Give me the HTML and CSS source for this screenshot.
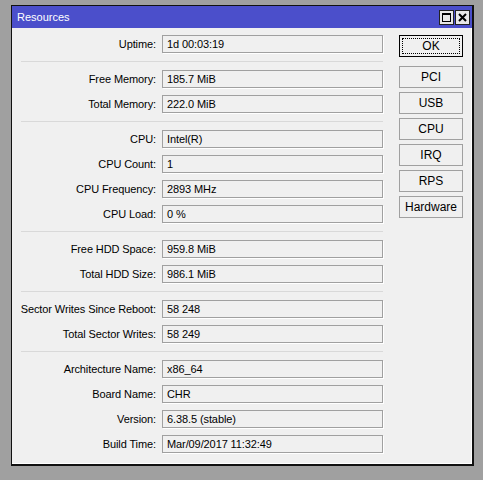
FILE: index.html
```html
<!DOCTYPE html>
<html lang="en">
<head>
  <link rel="stylesheet" href="styles.css">
</head>
<body>

<div class="win">
  <div class="titlebar">
    <span class="title">Resources</span>
    <div class="tbtns">
      <span class="tbtn">
        <svg width="9" height="9" viewBox="0 0 9 9"><rect x="0.5" y="0.5" width="8" height="8" fill="none" stroke="#000" stroke-width="1"/><rect x="0" y="0" width="9" height="2" fill="#000"/></svg>
      </span>
      <span class="tbtn">
        <svg width="9" height="9" viewBox="0 0 9 9"><path d="M1 1 L8 8 M8 1 L1 8" stroke="#000" stroke-width="2"/></svg>
      </span>
    </div>
  </div>

  <div class="body">
    <div class="fields">
      <div class="row"><span class="lbl">Uptime:</span><span class="val">1d 00:03:19</span></div>
      <div class="sep"></div>
      <div class="row"><span class="lbl">Free Memory:</span><span class="val">185.7 MiB</span></div>
      <div class="row"><span class="lbl">Total Memory:</span><span class="val">222.0 MiB</span></div>
      <div class="sep"></div>
      <div class="row"><span class="lbl">CPU:</span><span class="val">Intel(R)</span></div>
      <div class="row"><span class="lbl">CPU Count:</span><span class="val">1</span></div>
      <div class="row"><span class="lbl">CPU Frequency:</span><span class="val">2893 MHz</span></div>
      <div class="row"><span class="lbl">CPU Load:</span><span class="val">0 %</span></div>
      <div class="sep"></div>
      <div class="row"><span class="lbl">Free HDD Space:</span><span class="val">959.8 MiB</span></div>
      <div class="row"><span class="lbl">Total HDD Size:</span><span class="val">986.1 MiB</span></div>
      <div class="sep"></div>
      <div class="row"><span class="lbl">Sector Writes Since Reboot:</span><span class="val">58 248</span></div>
      <div class="row"><span class="lbl">Total Sector Writes:</span><span class="val">58 249</span></div>
      <div class="sep"></div>
      <div class="row"><span class="lbl">Architecture Name:</span><span class="val">x86_64</span></div>
      <div class="row"><span class="lbl">Board Name:</span><span class="val">CHR</span></div>
      <div class="row"><span class="lbl">Version:</span><span class="val">6.38.5 (stable)</span></div>
      <div class="row"><span class="lbl">Build Time:</span><span class="val">Mar/09/2017 11:32:49</span></div>
    </div>

    <div class="buttons">
      <a class="btn ok" href="#"><span class="focus">OK</span></a>
      <a class="btn" href="#">PCI</a>
      <a class="btn" href="#">USB</a>
      <a class="btn" href="#">CPU</a>
      <a class="btn" href="#">IRQ</a>
      <a class="btn" href="#">RPS</a>
      <a class="btn" href="#">Hardware</a>
    </div>
  </div>
</div>

</body>
</html>
```

FILE: styles.css
```css
body {
  margin: 0;
  background: #a0a0a0;
  font-family: "Liberation Sans", Arial, sans-serif;
  font-size: 11px;
  letter-spacing: -0.1px;
  color: #000;
}

.win {
  margin: 5px 0 0 11px;
  width: 460px;
  height: 458px;
  border: 1px solid #111;
  border-right-width: 2px;
  border-bottom-width: 2px;
  background: #f0f0f0;
  box-shadow: inset -1px -1px 0 #fff;
}

.titlebar {
  height: 22px;
  background: #4b4fcb;
  display: flex;
  align-items: center;
  justify-content: space-between;
  padding: 0 2px 0 5px;
}

.title {
  color: #fff;
  font-size: 11px;
  letter-spacing: 0;
}

.tbtns {
  display: flex;
  gap: 1px;
}

.tbtn {
  width: 13px;
  height: 13px;
  border: 1px solid #222;
  background: #e8e8e8;
  display: flex;
  align-items: center;
  justify-content: center;
}

.body {
  display: flex;
  padding-top: 7px;
}

.fields {
  width: 371px;
  display: flex;
  flex-direction: column;
  gap: 7px;
}

.row {
  display: flex;
  align-items: center;
  height: 18px;
}

.lbl {
  width: 144px;
  text-align: right;
  margin-right: 6px;
}

.val {
  width: 215px;
  height: 16px;
  line-height: 16px;
  padding-left: 4px;
  border: 1px solid #a0a0a0;
  box-shadow: 1px 1px 0 #fff;
}

.sep {
  height: 1px;
  margin: 1px 0 1px 9px;
  width: 362px;
  background: #d9d9d9;
}

.buttons {
  margin-left: 16px;
  display: flex;
  flex-direction: column;
  gap: 4px;
}

.btn {
  width: 62px;
  height: 20px;
  line-height: 20px;
  border: 1px solid #a0a0a0;
  background: #f0f0f0;
  color: #000;
  text-decoration: none;
  text-align: center;
  font-size: 12px;
  letter-spacing: 0;
}

.btn.ok {
  border-color: #000;
  margin-bottom: 5px;
  padding: 2px;
  width: 58px;
  height: 16px;
  line-height: 16px;
}

.btn .focus {
  display: block;
  height: 14px;
  line-height: 14px;
  border: 1px dotted #000;
}
```
